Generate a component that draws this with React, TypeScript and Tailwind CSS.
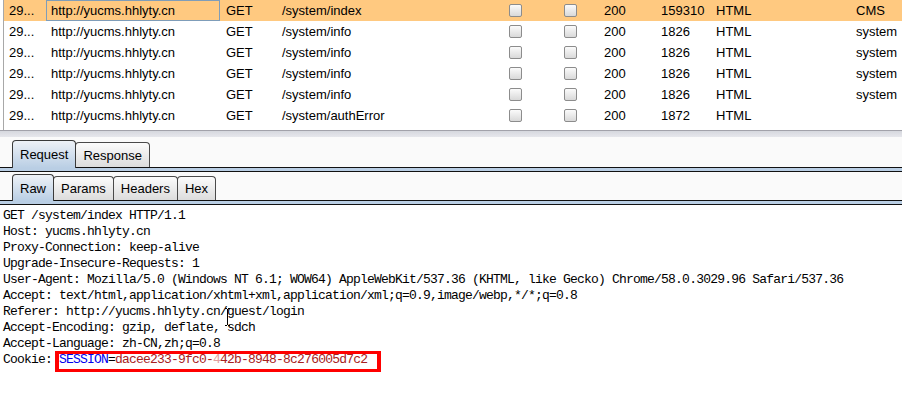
const rows = [
  { path: "/system/index", len: "159310", title: "CMS", selected: true },
  { path: "/system/info", len: "1826", title: "system" },
  { path: "/system/info", len: "1826", title: "system" },
  { path: "/system/info", len: "1826", title: "system" },
  { path: "/system/info", len: "1826", title: "system" },
  { path: "/system/authError", len: "1872", title: "" },
];

const requestLines = [
  "GET /system/index HTTP/1.1",
  "Host: yucms.hhlyty.cn",
  "Proxy-Connection: keep-alive",
  "Upgrade-Insecure-Requests: 1",
  "User-Agent: Mozilla/5.0 (Windows NT 6.1; WOW64) AppleWebKit/537.36 (KHTML, like Gecko) Chrome/58.0.3029.96 Safari/537.36",
  "Accept: text/html,application/xhtml+xml,application/xml;q=0.9,image/webp,*/*;q=0.8",
  "Referer: http://yucms.hhlyty.cn/guest/login",
  "Accept-Encoding: gzip, deflate, sdch",
  "Accept-Language: zh-CN,zh;q=0.8",
];

const Checkbox = () => (
  <div className="w-[13px] h-[13px] rounded-[2px] border border-[#8c8c8c] bg-linear-to-b from-[#fbfbfb] to-[#d9d9d9]" />
);

type TabProps = {
  label: string;
  selected?: boolean;
};

const Tab = ({ label, selected }: TabProps) => (
  <div
    className={
      selected
        ? "relative z-10 -mb-px flex items-center px-[7px] border border-b-0 border-[#3a3a3a] rounded-t-[4px] bg-linear-to-b from-[#eef2f7] to-[#b9cee4]"
        : "-ml-px flex items-center px-[7px] border border-b-0 border-[#4a4a4a] rounded-t-[4px] bg-linear-to-b from-[#fcfcfc] to-[#dcdcdc]"
    }
  >
    {label}
  </div>
);

const Band = () => (
  <div className="h-[5px] border-y border-[#111] bg-[#b9cee4]" />
);

export default function App() {
  return (
    <div
      className="w-[902px] h-[406px] overflow-hidden bg-white text-black"
      style={{ fontFamily: '"Liberation Sans", Arial, sans-serif' }}
    >
      {/* history table */}
      <div className="h-[130px] ml-[3px] border-l border-[#a8a8a8] text-[13px]">
        {rows.map((r, i) => (
          <div
            key={i}
            className={`h-[21px] grid grid-cols-[42px_174px_57px_223px_55px_44px_57px_55px_140px_1fr] items-center ${
              r.selected ? "bg-[#ffc980]" : ""
            }`}
          >
            <div className="pl-[5px]">29...</div>
            <div
              className={`h-[21px] flex items-center pl-[4px] border ${
                r.selected ? "border-[#7f9db9]" : "border-transparent"
              }`}
            >
              http://yucms.hhlyty.cn
            </div>
            <div className="pl-[6px]">GET</div>
            <div className="pl-[5px]">{r.path}</div>
            <div className="pl-[9px]">
              <Checkbox />
            </div>
            <div className="pl-[9px]">
              <Checkbox />
            </div>
            <div className="pl-[5px]">200</div>
            <div className="pl-[5px]">{r.len}</div>
            <div className="pl-[5px]">HTML</div>
            <div className="pl-[5px]">{r.title}</div>
          </div>
        ))}
      </div>

      {/* splitter */}
      <div className="h-[7px] border-t border-[#a2a2aa] bg-linear-to-b from-[#d6d8de] to-[#e6e7ec]" />

      {/* tabs */}
      <div className="bg-[#fafafa] pt-[4px] text-[13px] leading-none">
        <div className="flex items-end pl-3 h-[26px]">
          <div className="h-[27px] flex">
            <Tab label="Request" selected />
          </div>
          <div className="h-[25px] flex">
            <Tab label="Response" />
          </div>
        </div>
        <Band />
        <div className="h-[3px]" />
        <div className="flex items-end pl-3 h-[25px]">
          <div className="h-[26px] flex">
            <Tab label="Raw" selected />
          </div>
          <div className="h-[24px] flex">
            <Tab label="Params" />
          </div>
          <div className="h-[24px] flex">
            <Tab label="Headers" />
          </div>
          <div className="h-[24px] flex">
            <Tab label="Hex" />
          </div>
        </div>
        <Band />
      </div>

      {/* raw request */}
      <div
        className="relative pt-[3px] pl-[3px] text-[13px] leading-[16px] tracking-[-0.8px] whitespace-pre"
        style={{ fontFamily: '"Liberation Mono", "Courier New", monospace' }}
      >
        {requestLines.map((l, i) => (
          <div key={i}>{l}</div>
        ))}
        <div>
          Cookie:{" "}
          <span className="relative">
            <span className="text-[#0000ee]">SESSION</span>=
            <span className="text-[#a82020]">
              dacee233-9fc0-<span className="text-[#e3a0a0]">4</span>42b-8948-8c276005d7c2
            </span>
            <span className="absolute -left-[4px] -right-[14px] -top-[1px] -bottom-[5px] border-x-4 border-y-[3px] border-[#ff0000]" />
          </span>
        </div>
        <svg
          className="absolute left-[224px] top-[103px]"
          width="7"
          height="18"
          viewBox="0 0 7 18"
        >
          <path d="M1 0.5h2M4 0.5h2M3.5 1v16M1 17.5h2M4 17.5h2" stroke="#000" strokeWidth="1" fill="none" />
        </svg>
      </div>
    </div>
  );
}
